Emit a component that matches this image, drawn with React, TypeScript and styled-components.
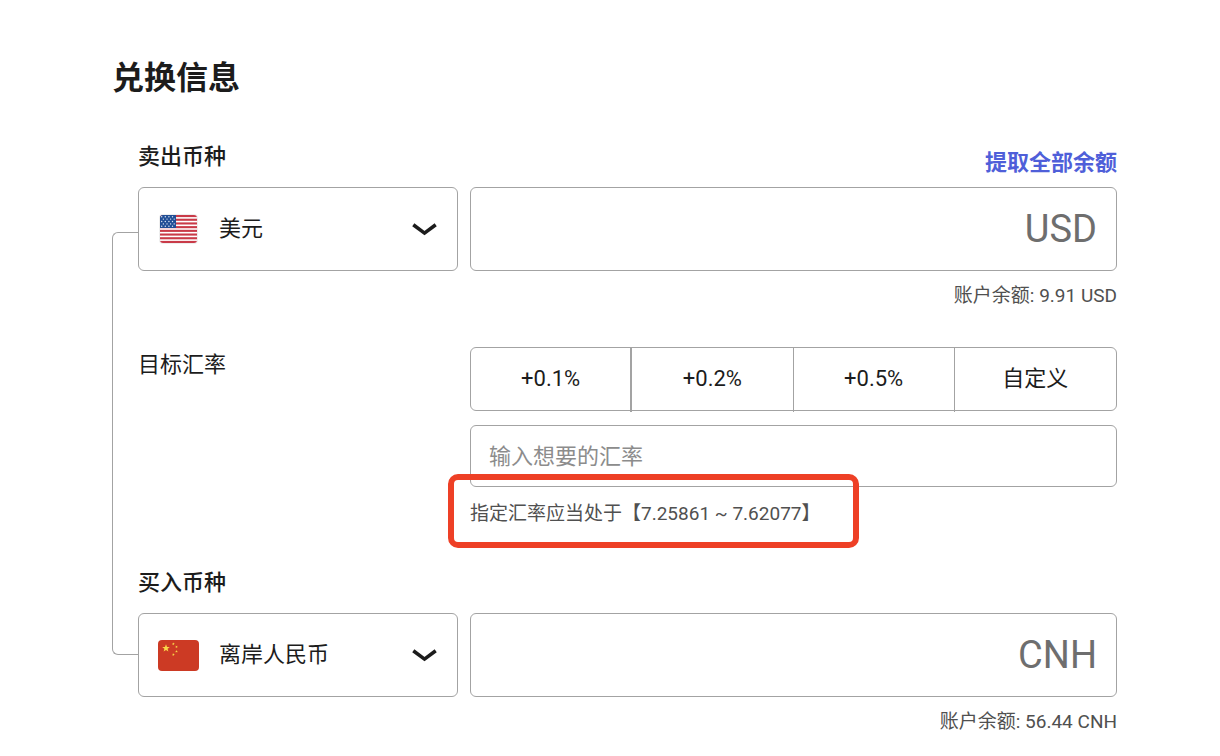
import React from 'react';
import styled, { createGlobalStyle } from 'styled-components';

const GlobalStyle = createGlobalStyle`
  *, *::before, *::after { box-sizing: border-box; }
  body {
    margin: 0;
    background: #fff;
    color: #1c1c1c;
    font-family: Roboto, "Noto Sans CJK SC", sans-serif;
    font-size: 22px;
    line-height: 32px;
  }
  button, input, select { font: inherit; color: inherit; }
`;

const line = '#a3a3a3';

const Page = styled.main`
  padding: 54px 103px 20px 112px;
`;

const Title = styled.h1`
  margin: 0 0 39px;
  font-size: 32px;
  line-height: 48px;
  font-weight: 700;
`;

const Body = styled.div`
  display: flex;
`;

const Connector = styled.div`
  flex: none;
  width: 26px;
  margin: 91px 0 81px;
  border: 1px solid ${line};
  border-right: 0;
  border-radius: 6px 0 0 6px;
`;

const Form = styled.form`
  flex: 1;
  min-width: 0;
`;

const Section = styled.section`
  & + & { margin-top: 37px; }
`;

const Head = styled.div`
  display: flex;
  justify-content: space-between;
  align-items: flex-end;
  height: 46px;
`;

const Label = styled.label`
  align-self: flex-start;
  font-weight: 500;
`;

const WithdrawLink = styled.a`
  padding-bottom: 8px;
  color: #4f5fd9;
  font-weight: 700;
  text-decoration: none;
`;

const Columns = styled.div`
  display: grid;
  grid-template-columns: 320px minmax(0, 1fr);
  column-gap: 12px;
`;

const Box = styled.div`
  display: flex;
  align-items: center;
  height: 84px;
  padding: 0 19px;
  border: 1px solid ${line};
  border-radius: 6px;
`;

const CurrencyBox = styled(Box)`
  padding-right: 20px;
`;

const CurrencySelect = styled.select`
  flex: 1;
  min-width: 0;
  height: 80px;
  margin-left: 20px;
  padding: 0;
  border: 0;
  outline: 0;
  background: transparent;
  appearance: none;
`;

const AmountInput = styled.input`
  flex: 1;
  min-width: 0;
  height: 80px;
  padding: 0;
  border: 0;
  outline: 0;
  background: transparent;
  font-size: 38px;
  text-align: right;
`;

const Code = styled.span`
  color: #6e6e6e;
  font-size: 38px;
  line-height: 48px;
`;

const Note = styled.p`
  margin: 11px 0 0;
  color: #505050;
  font-size: 19px;
  line-height: 28px;
  text-align: right;
`;

const RateLabel = styled.label`
  padding-top: 2px;
`;

const Presets = styled.div`
  display: grid;
  grid-template-columns: repeat(4, 1fr);
  height: 64px;
  border: 1px solid ${line};
  border-radius: 6px;
`;

const Preset = styled.button<{ $divider: number }>`
  margin-bottom: -2px;
  padding: 0 0 2px;
  border: 0;
  border-right: ${(p) => p.$divider}px solid ${line};
  background: transparent;
`;

const RateInput = styled.input`
  display: block;
  width: 100%;
  height: 62px;
  margin-top: 14px;
  padding: 0 18px;
  border: 1px solid ${line};
  border-radius: 6px;
  outline: 0;
  &::placeholder { color: #8c8c8c; opacity: 1; }
`;

const RateHint = styled.p`
  position: relative;
  margin: 13px 0 0;
  padding-bottom: 2px;
  color: #505050;
  font-size: 19px;
  line-height: 28px;
`;

const Highlight = styled.span`
  position: absolute;
  top: -26px;
  left: -22px;
  width: 411px;
  height: 74px;
  border: 6px solid #ee4026;
  border-radius: 10px;
  pointer-events: none;
`;

const Icon = styled.svg`
  flex: none;
  display: block;
`;

const UsFlag = () => (
  <Icon width="41" height="31" viewBox="0 0 41 31" aria-hidden="true">
    <defs>
      <clipPath id="us-clip"><rect x="2" y="1" width="37" height="28" rx="3" /></clipPath>
    </defs>
    <rect x="1" y="0" width="39" height="30" rx="4" fill="#eeeeee" />
    <g clipPath="url(#us-clip)">
      <rect x="2" y="0" width="37" height="30" fill="#fff" />
      {[0, 1, 2, 3, 4, 5, 6, 7].map((i) => (
        <rect key={i} x="2" y={1 + i * 3.7} width="37" height="2.1" fill="#c93a48" />
      ))}
      <rect x="2" y="1" width="16" height="13" fill="#214f96" />
      {[0, 1, 2, 3, 4].map((r) =>
        [0, 1, 2, 3].map((c) => (
          <circle key={`${r}-${c}`} cx={(r % 2 ? 5.4 : 3.7) + c * 3.6} cy={2.7 + r * 2.4} r="0.7" fill="#dfe8f5" />
        )),
      )}
    </g>
  </Icon>
);

const star = 'M0-1 .26-.32 .95-.31 .4.12 .59.81 0 .42-.59.81-.4.12-.95-.31-.26-.32Z';

const CnFlag = () => (
  <Icon width="41" height="31" viewBox="0 0 41 31" aria-hidden="true">
    <rect width="41" height="31" rx="4" fill="#cc3a24" />
    <g fill="#f8d648">
      <path d={star} transform="translate(8 8.3) scale(4)" />
      <path d={star} transform="translate(15.4 3.8) rotate(20) scale(1.5)" />
      <path d={star} transform="translate(18.5 6.8) rotate(40) scale(1.5)" />
      <path d={star} transform="translate(18.5 11.4) scale(1.5)" />
      <path d={star} transform="translate(15.4 14.6) rotate(20) scale(1.5)" />
    </g>
  </Icon>
);

const Chevron = () => (
  <Icon width="25" height="15" viewBox="0 0 25 15" aria-hidden="true" pointerEvents="none">
    <path d="M1.3 2.7 12.5 11.1 23.7 2.7" fill="none" stroke="#1c1c1c" strokeWidth="3.6" />
  </Icon>
);

type CurrencyProps = {
  id: string;
  title: string;
  name: string;
  code: string;
  balance: string;
  flag: React.ReactNode;
  link?: string;
};

const Currency = ({ id, title, name, code, balance, flag, link }: CurrencyProps) => (
  <Section>
    <Head>
      <Label htmlFor={`${id}-currency`}>{title}</Label>
      {link && <WithdrawLink href="#all">{link}</WithdrawLink>}
    </Head>
    <Columns>
      <CurrencyBox>
        {flag}
        <CurrencySelect id={`${id}-currency`} defaultValue={code}>
          <option value={code}>{name}</option>
        </CurrencySelect>
        <Chevron />
      </CurrencyBox>
      <Box>
        <AmountInput id={`${id}-amount`} inputMode="decimal" aria-labelledby={`${id}-code`} />
        <Code id={`${id}-code`}>{code}</Code>
      </Box>
    </Columns>
    <Note>账户余额: {balance} {code}</Note>
  </Section>
);

const presets = ['+0.1%', '+0.2%', '+0.5%', '自定义'];

export default function App() {
  return (
    <>
      <GlobalStyle />
      <Page>
        <Title>兑换信息</Title>
        <Body>
          <Connector />
          <Form onSubmit={(e) => e.preventDefault()}>
            <Currency id="sell" title="卖出币种" name="美元" code="USD" balance="9.91" flag={<UsFlag />} link="提取全部余额" />
            <Section>
              <Columns>
                <RateLabel htmlFor="rate">目标汇率</RateLabel>
                <div>
                  <Presets>
                    {presets.map((text, i) => (
                      <Preset key={text} type="button" $divider={[2, 1, 1, 0][i]}>{text}</Preset>
                    ))}
                  </Presets>
                  <RateInput id="rate" inputMode="decimal" placeholder="输入想要的汇率" />
                  <RateHint>
                    指定汇率应当处于【7.25861 ~ 7.62077】
                    <Highlight />
                  </RateHint>
                </div>
              </Columns>
            </Section>
            <Currency id="buy" title="买入币种" name="离岸人民币" code="CNH" balance="56.44" flag={<CnFlag />} />
          </Form>
        </Body>
      </Page>
    </>
  );
}
